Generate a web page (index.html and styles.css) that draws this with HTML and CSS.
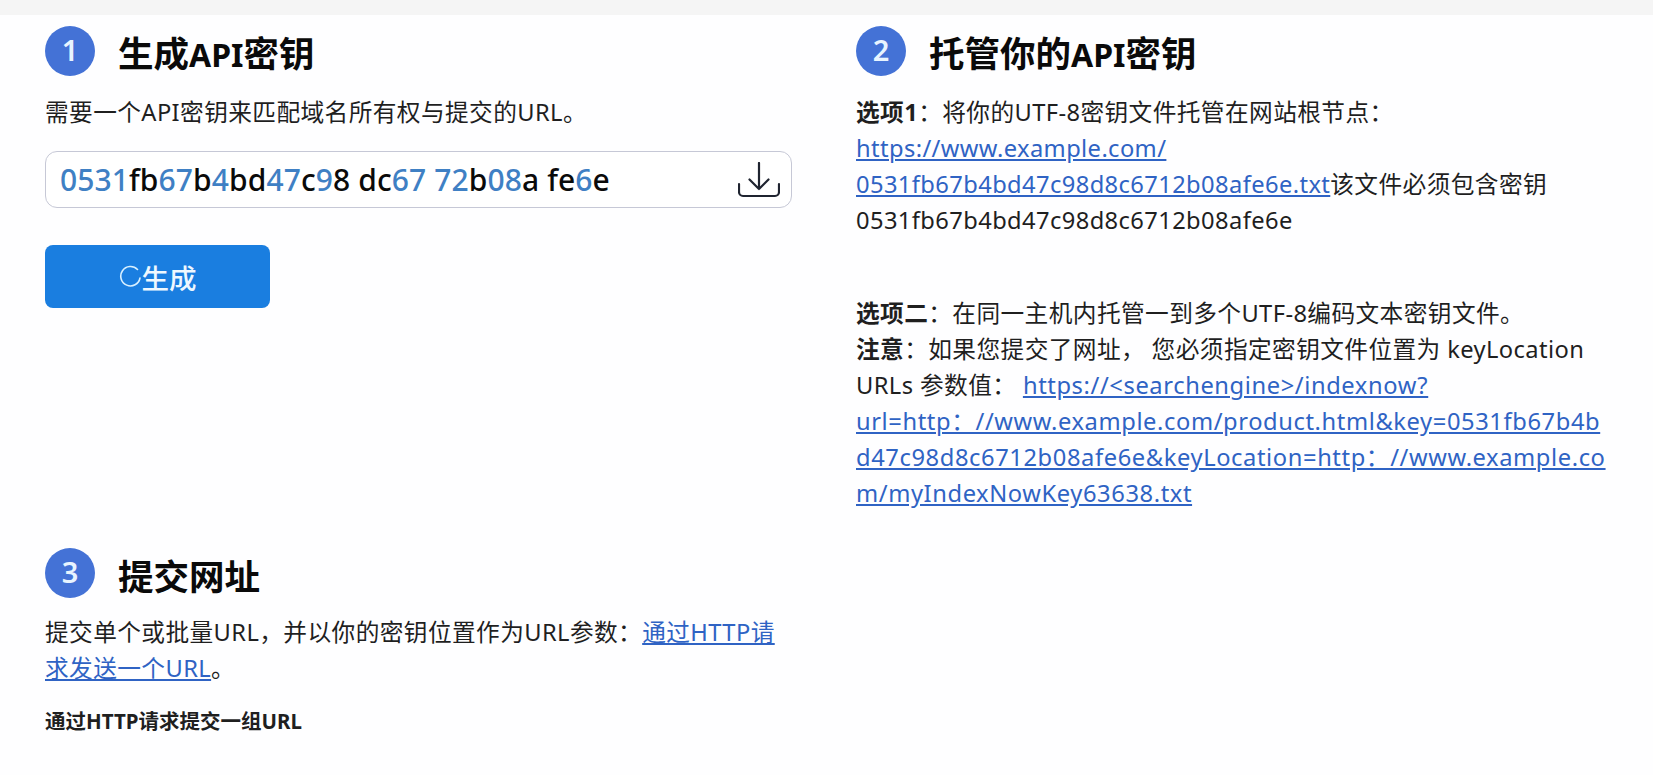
FILE: index.html
```html
<!DOCTYPE html>
<html lang="zh-CN">
<head>
<meta charset="utf-8">
<title>IndexNow</title>
<link rel="stylesheet" href="styles.css">
</head>
<body>
<div class="topbar"></div>
<main class="grid">
  <section class="step step-one">
    <header class="step-head"><span class="num">1</span><h2>生成<span class="latin">API</span>密钥</h2></header>
    <p class="text">需要一个API密钥来匹配域名所有权与提交的URL。</p>
    <div class="key-box">
      <span class="key"><i>0531</i>fb<i>67</i>b<i>4</i>bd<i>47</i>c<i>9</i>8 dc<i>67</i> <i>72</i>b<i>08</i>a fe<i>6</i>e</span>
      <svg class="dl" width="42" height="36" viewBox="0 0 42 36" fill="none" stroke="#1f2430" stroke-width="2.2" stroke-linecap="round" stroke-linejoin="round"><path d="M21 1v26M11.500 17.500L21 27l9.500-9.500"/><path d="M1 22v8a4 4 0 0 0 4 4h32a4 4 0 0 0 4-4v-8"/></svg>
    </div>
    <button class="gen" type="button">
      <svg width="23" height="23" viewBox="0 0 23 23" fill="none" stroke="#d8f0ff" stroke-width="1.600" stroke-linecap="round"><path d="M18.500 4.500A9.700 9.700 0 1 0 21 13"/></svg>
      <span>生成</span>
    </button>
  </section>

  <section class="step step-two">
    <header class="step-head"><span class="num">2</span><h2>托管你的<span class="latin">API</span>密钥</h2></header>
    <p class="text option"><b>选项1</b>：将你的UTF-8密钥文件托管在网站根节点：<br><a href="#">https://www.example.com/<br>0531fb67b4bd47c98d8c6712b08afe6e.txt</a>该文件必须包含密钥<br>0531fb67b4bd47c98d8c6712b08afe6e</p>
    <p class="text option-two"><b>选项二</b>：在同一主机内托管一到多个UTF-8编码文本密钥文件。<br><b>注意</b>：如果您提交了网址， 您必须指定密钥文件位置为 keyLocation URLs 参数值： <a class="wide-link" href="#">https://&lt;searchengine&gt;/indexnow?url=http：//www.example.com/product.html&amp;key=0531fb67b4bd47c98d8c6712b08afe6e&amp;keyLocation=http：//www.example.com/myIndexNowKey63638.txt</a></p>
  </section>

  <section class="step step-three">
    <header class="step-head"><span class="num">3</span><h2>提交网址</h2></header>
    <p class="text text-tight">提交单个或批量URL，并以你的密钥位置作为URL参数：<a href="#">通过HTTP请求发送一个URL</a>。</p>
    <h4 class="sub">通过HTTP请求提交一组URL</h4>
  </section>
</main>
</body>
</html>
```

FILE: styles.css
```css
* { box-sizing: border-box; }
html, body { margin: 0; height: 100%; overflow: hidden; }
body {
  background: #fefeff;
  color: #1f1f1f;
  font-family: "Noto Sans", "Noto Sans CJK SC", sans-serif;
}
.topbar { height: 15px; background: #f5f5f5; }
.grid {
  display: grid;
  grid-template-columns: 747px 752px;
  grid-template-rows: 522px auto;
  column-gap: 64px;
  padding: 11px 0 0 45px;
}
.step-three { grid-column: 1; grid-row: 2; }
.step-head { display: flex; align-items: center; gap: 23px; height: 50px; }
.num {
  flex: none;
  width: 50px;
  height: 50px;
  border-radius: 50%;
  background: #4472d6;
  color: #e8f4ff;
  font-size: 29px;
  font-weight: 600;
  line-height: 48px;
  text-align: center;
}
h2 { margin: 0; padding-top: 5px; font-size: 35.500px; font-weight: 700; line-height: 50px; color: #0a0a0a; }
.latin { font-size: 32px; }
.text { margin: 18px 0 0; font-size: 23.700px; letter-spacing: 0.4px; line-height: 36px; overflow-wrap: anywhere; }
.text-tight { margin-top: 16px; }
.text a { color: #2f63c4; text-decoration: underline; }
.text a.wide-link { letter-spacing: 0.6px; }
.text b { font-weight: 700; }
.option-two { margin-top: 57px; }
.key-box {
  display: flex;
  align-items: center;
  justify-content: space-between;
  height: 57px;
  margin-top: 21px;
  padding: 0 11px 0 14px;
  border: 1px solid #c6c8d6;
  border-radius: 12px;
  background: #fff;
}
.key { font-size: 30px; font-weight: 500; letter-spacing: 0.1px; color: #0a0a0a; white-space: pre; }
.key i { font-style: normal; color: #3f80c4; }
.dl { flex: none; }
.gen {
  display: flex;
  align-items: center;
  justify-content: center;
  width: 225px;
  height: 63px;
  margin-top: 37px;
  border: 0;
  border-radius: 8px;
  background: #1a7ee0;
  color: #eef8ff;
  font: 500 27.500px "Noto Sans", "Noto Sans CJK SC", sans-serif;
}
.sub { margin: 20px 0 0; font-size: 20.500px; font-weight: 700; line-height: 30px; }
```
